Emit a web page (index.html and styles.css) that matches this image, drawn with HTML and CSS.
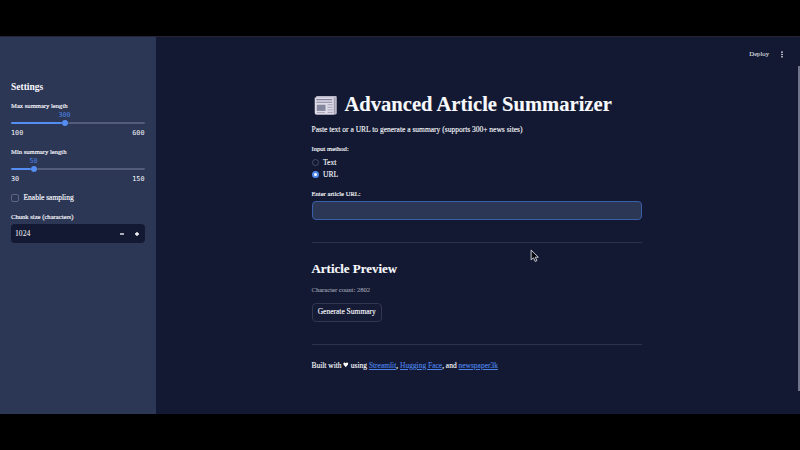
FILE: index.html
```html
<!DOCTYPE html>
<html lang="en">
<head>
<meta charset="utf-8">
<title>Advanced Article Summarizer</title>
<link rel="stylesheet" href="styles.css">
</head>
<body>
<div class="app">
  <aside class="sidebar">
    <h2 class="side-title">Settings</h2>
    <div class="slider">
      <label class="label">Max summary length</label>
      <div class="value value-max"><span>300</span></div>
      <div class="rail"><div class="fill fill-max"></div><div class="thumb"></div><div class="rest"></div></div>
      <div class="ticks"><span>100</span><span>600</span></div>
    </div>
    <div class="slider">
      <label class="label">Min summary length</label>
      <div class="value value-min"><span>50</span></div>
      <div class="rail"><div class="fill fill-min"></div><div class="thumb"></div><div class="rest"></div></div>
      <div class="ticks"><span>30</span><span>150</span></div>
    </div>
    <div class="check"><span class="box"></span><span class="check-text">Enable sampling</span></div>
    <label class="label">Chunk size (characters)</label>
    <div class="number">
      <span class="number-value">1024</span>
      <svg class="step" viewBox="0 0 6 6"><path d="M1 3h4"/></svg>
      <svg class="step" viewBox="0 0 6 6"><path d="M1 3h4M3 1v4"/></svg>
    </div>
  </aside>
  <main class="main">
    <header class="toolbar">
      <span class="deploy">Deploy</span>
      <svg class="dots" viewBox="0 0 4 8"><circle cx="2" cy="1.3" r=".9"/><circle cx="2" cy="4" r=".9"/><circle cx="2" cy="6.7" r=".9"/></svg>
    </header>
    <div class="content">
      <h1 class="title">
        <svg class="news" viewBox="0 0 24 20">
          <path d="M3 1h19.500l.5 1v16l-1 1H3z" fill="#b9b6c6"/>
          <path d="M1.500 2.500h18.500v15.500q0 1 1.300 1H3q-1.500 0-1.500-1.500z" fill="#dedbe8"/>
          <path d="M20.700 3v15" stroke="#8f8da4" stroke-width=".7"/>
          <path d="M3 4.500h15.500M3 7h15.500" stroke="#85849b" stroke-width="1"/>
          <path d="M3.500 9.500h8.500v6h-8.500z" fill="#85879f"/>
          <path d="M14 9.500h5M14 12h5M14 14.500h5M3.500 17.200h8M14 17h5" stroke="#9897ac" stroke-width=".8"/>
        </svg>
        <span class="title-text">Advanced Article Summarizer</span>
      </h1>
      <p class="intro">Paste text or a URL to generate a summary (supports 300+ news sites)</p>
      <div class="label">Input method:</div>
      <div class="radios">
        <div class="radio"><span class="dot"></span><span>Text</span></div>
        <div class="radio"><span class="dot dot-on"></span><span>URL</span></div>
      </div>
      <label class="label">Enter article URL:</label>
      <div class="url"></div>
      <hr class="rule">
      <h3 class="preview">Article Preview</h3>
      <p class="count">Character count: 2802</p>
      <button class="button">Generate Summary</button>
      <hr class="rule">
      <p class="credits">Built with <svg class="heart" viewBox="0 0 6 6"><path d="M3 5.600 .5 2.800Q0 1 1.200.5 2.400.3 3 1.400 3.600.3 4.800.5 6 1 5.500 2.800z"/></svg> using <a>Streamlit</a>, <a>Hugging Face</a>, and <a>newspaper3k</a></p>
    </div>
    <div class="scrollbar"></div>
    <svg class="cursor" viewBox="0 0 9 13"><path d="M1 1v9.500l2.300-2 1.600 3.500 1.700-.8L5 7.900h3z"/></svg>
  </main>
</div>
</body>
</html>
```
FILE: styles.css
```css
* { box-sizing: border-box; }
body {
  margin: 0;
  height: 450px;
  padding: 36px 0;
  overflow: hidden;
  background: #000;
  color: #f8f9fd;
  font: 7.2px/10px "Liberation Serif", serif;
}
h1, h2, h3, p { margin: 0; }
.app { display: flex; height: 377.500px; border-top: 1px solid #242432; background: #131932; }

.sidebar { width: 156px; padding: 43px 11.500px 0 11px; background: #2c3655; }
.side-title { margin-bottom: 7px; font-size: 9.500px; line-height: 14px; }
.label { display: block; height: 10px; font-size: 6.620px; line-height: 10px; white-space: nowrap; -webkit-text-stroke: .15px; }
.slider { margin-bottom: 9px; }
.value { display: flex; justify-content: center; height: 9px; color: #4c83e4; font: 6.750px/9px "DejaVu Sans Mono", monospace; }
.value-max { width: 107px; }
.value-min { width: 45px; }
.rail { display: flex; align-items: center; height: 6px; }
.fill { height: 2px; border-radius: 1px; background: #558ef2; }
.fill-max { width: 50.500px; }
.fill-min { width: 19.500px; }
.thumb { width: 6px; height: 6px; border-radius: 50%; background: #558ef2; }
.rest { flex: 1; height: 2px; border-radius: 1px; background: #535d7a; }
.ticks { display: flex; justify-content: space-between; margin-top: 3px; font: 6.750px/9px "DejaVu Sans Mono", monospace; }
.check { display: flex; align-items: center; gap: 5px; height: 10px; margin-bottom: 9px; font-size: 7.500px; -webkit-text-stroke: .15px; }
.box { width: 7.500px; height: 7.500px; border: 1px solid #5d6682; border-radius: 2px; }
.number { display: flex; align-items: center; height: 19px; margin-top: 2px; padding: 0 5px 0 4px; border-radius: 4px; background: #131932; }
.number-value { flex: 1; font-size: 7.700px; }
.step { width: 6px; height: 6px; margin-left: 9px; fill: none; stroke: #fff; stroke-width: 1.300; }

.main { position: relative; flex: 1; }
.toolbar { display: flex; justify-content: flex-end; align-items: center; gap: 11px; height: 34px; padding-right: 16px; font-size: 6.700px; }
.dots { width: 4px; height: 7px; fill: #fff; }
.content { width: 330.500px; margin: 21px 0 0 155.500px; -webkit-text-stroke: .12px; }
.title { display: flex; align-items: center; height: 24px; font-size: 20.570px; line-height: 24px; white-space: nowrap; }
.news { width: 25px; height: 20.500px; margin: 2px 6.500px 0 1.500px; }
.intro { margin: 9px 0; font-size: 7.510px; white-space: nowrap; }
.radios { margin: 2.500px 0 8.500px; }
.radio { display: flex; align-items: center; gap: 4px; height: 12px; font-size: 7.600px; }
.dot { width: 7.500px; height: 7.500px; border: 1px solid #454c65; border-radius: 50%; }
.dot-on { border: 2.300px solid #4f89f0; background: #fff; }
.url { height: 19px; margin-top: 2px; border: 1px solid #3a5fa9; border-radius: 4px; background: #2c3655; }
.rule { height: 1px; margin: 22px 0 19px; border: 0; background: #2b324b; }
.preview { font-size: 12.950px; line-height: 14px; }
.count { margin: 9px 0 7.500px; color: #9a9dac; font-size: 6.600px; }
.button { display: block; width: 70.500px; height: 19px; padding: 0; border: 1px solid #30374f; border-radius: 4px; background: #151b35; color: inherit; font: 7.520px/10px "Liberation Serif", serif; white-space: nowrap; }
.credits { margin-top: -3px; font-size: 7.470px; white-space: nowrap; }
.credits a { color: #4c83e4; text-decoration: underline; }
.heart { width: 5.500px; height: 5.500px; fill: #fff; }
.scrollbar { position: absolute; top: 28.500px; right: 0; width: 2.500px; height: 325px; background: #70758b; }
.cursor { position: absolute; left: 373.500px; top: 212px; width: 9.500px; height: 13.500px; fill: #090a12; stroke: #d5d6de; stroke-width: .9; }
```
